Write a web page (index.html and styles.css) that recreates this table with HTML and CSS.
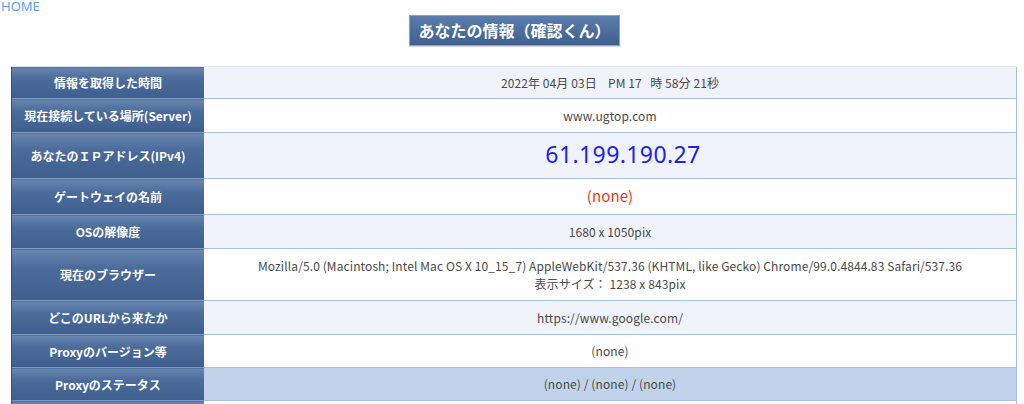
FILE: index.html
```html
<!DOCTYPE html>
<html lang="ja">
<head>
<meta charset="utf-8">
<link rel="stylesheet" href="styles.css">
</head>
<body>
<a class="home" href="#">HOME</a>
<div class="title-wrap"><h1 class="title">あなたの情報（確認くん）</h1></div>
<table class="info">
  <tr class="r1 alt"><th>情報を取得した時間</th><td>2022年 04月 03日&nbsp;&nbsp;&nbsp;&nbsp;PM 17&nbsp;&nbsp;&nbsp;時 58分 21秒</td></tr>
  <tr class="r2"><th>現在接続している場所(Server)</th><td>www.ugtop.com</td></tr>
  <tr class="r3 alt"><th>あなたのＩＰアドレス(IPv4)</th><td><span class="ip">61.199.190.27</span></td></tr>
  <tr class="r4"><th>ゲートウェイの名前</th><td><span class="none">(none)</span></td></tr>
  <tr class="r5 alt"><th>OSの解像度</th><td>1680 x 1050pix</td></tr>
  <tr class="r6"><th>現在のブラウザー</th><td>Mozilla/5.0 (Macintosh; Intel Mac OS X 10_15_7) AppleWebKit/537.36 (KHTML, like Gecko) Chrome/99.0.4844.83 Safari/537.36<br>表示サイズ： 1238 x 843pix</td></tr>
  <tr class="r7 alt"><th>どこのURLから来たか</th><td>https://www.google.com/</td></tr>
  <tr class="r8"><th>Proxyのバージョン等</th><td>(none)</td></tr>
  <tr class="r9 hl"><th>Proxyのステータス</th><td>(none) / (none) / (none)</td></tr>
  <tr class="r10"><th>&nbsp;</th><td>&nbsp;</td></tr>
</table>
</body>
</html>
```
FILE: styles.css
```css
html, body { margin: 0; padding: 0; background: #fff; }
body {
  font-family: "Noto Sans CJK JP", "Noto Sans", sans-serif;
  color: #444;
  overflow: hidden;
  height: 404px;
}
.home {
  display: block;
  color: #5e9ef2;
  font-size: 13px;
  line-height: 13px;
  height: 13px;
  padding-left: 1px;
  text-decoration: none;
  font-family: "Noto Sans", "Noto Sans CJK JP", sans-serif;
}
.title-wrap { display: flex; justify-content: center; padding-top: 2px; }
.title {
  margin: 0 0 0 5px;
  width: 211px;
  height: 31px;
  box-sizing: border-box;
  background: linear-gradient(#5c7cab, #3f5f8f);
  border: 1px solid #8aa2c6;
  color: #fff;
  font-size: 16px;
  font-weight: bold;
  line-height: 29px;
  text-align: center;
  box-shadow: 0 1px 1px rgba(0,0,0,0.15);
}
.info {
  margin: 20px 0 0 11px;
  width: 1006px;
  border-collapse: collapse;
  border-right: 1px solid #a6c1e6;
  font-size: 12px;
}
.info th {
  width: 192px;
  padding: 0;
  color: #fff;
  font-weight: bold;
  font-size: 12px;
  background: linear-gradient(#6886b0 0%, #4c6c9b 35%, #3e5e8e 100%);
  border-top: 1px solid #7f9bc2;
  border-left: 1px solid #35507a;
  text-align: center;
}
.info td {
  padding: 0;
  text-align: center;
  border-top: 1px solid #a6c1e6;
  line-height: 18px;
  color: #4a4a4a;
  letter-spacing: 0.1px;
}
.info tr.alt td { background: #f0f3f9; }
.info tr.hl td { background: #c1d3ea; border-bottom: 1px solid #a6c1e6; }
.r1 { height: 32px; }
.r1 th, .r1 td { border-top-color: #dfe6f0; }
.r2 { height: 34px; }
.r3 { height: 46px; }
.r4 { height: 36px; }
.r5 { height: 34px; }
.r6 { height: 52px; }
.r7 { height: 34px; }
.r8 { height: 33px; }
.r9 { height: 33px; }
.r10 { height: 30px; }
.ip { color: #1d22e8; font-size: 23px; letter-spacing: 0.4px; padding-left: 26px; font-family: "Noto Sans", sans-serif; }
.none { color: #ee3a20; font-size: 15px; }
```
